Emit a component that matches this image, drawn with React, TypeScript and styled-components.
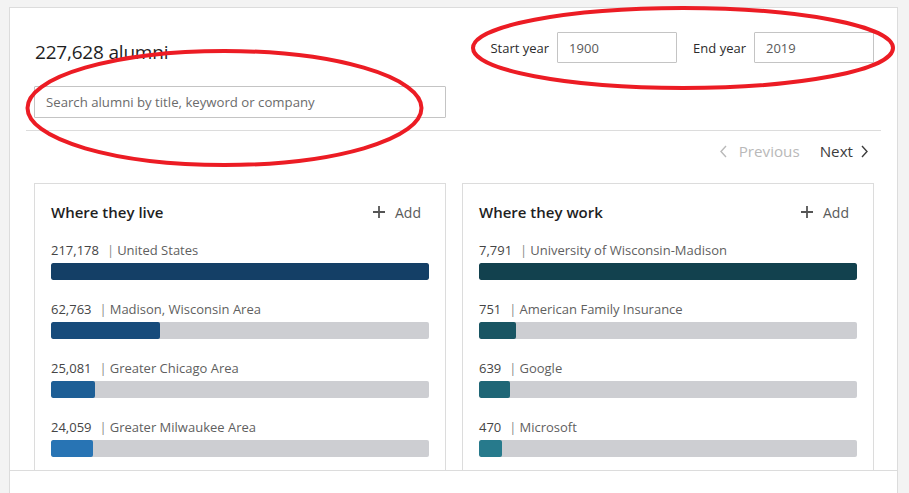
import React from "react";
import styled, { createGlobalStyle } from "styled-components";

const Global = createGlobalStyle`
  html, body { margin: 0; padding: 0; }
  body {
    background: #f3f3f3;
    font-family: "Open Sans", "Noto Sans", Arial, sans-serif;
    color: #333;
    overflow: hidden;
  }
  * { box-sizing: border-box; }
`;

const Page = styled.div`
  position: relative;
  height: 493px;
  padding: 7px 11px 0 9px;
`;

const Shell = styled.div`
  background: #fff;
  border: 1px solid #dcdcdc;
  border-bottom: none;
  height: 486px;
  display: flex;
  flex-direction: column;
`;

const Header = styled.div`
  display: flex;
  justify-content: space-between;
  align-items: flex-start;
  padding: 24px 23px 0 24px;
`;

const LeftCol = styled.div`
  display: flex;
  flex-direction: column;
`;

const Count = styled.h1`
  margin: 7px 0 0 1px;
  font-size: 19px;
  line-height: 26px;
  font-weight: 400;
  color: #1f1f1f;
  letter-spacing: -0.2px;
`;

const Search = styled.input`
  margin-top: 21px;
  width: 412px;
  height: 32px;
  border: 1px solid #c4c4c4;
  border-radius: 1px;
  padding: 0 11px;
  font-family: inherit;
  font-size: 13.2px;
  color: #333;
  &::placeholder { color: #6b6b6b; }
  outline: none;
`;

const YearGroup = styled.div`
  display: flex;
  align-items: center;
`;

const YearLabel = styled.label<{ $first?: boolean }>`
  font-size: 13px;
  color: #2b2b2b;
  margin-right: 8px;
  margin-left: ${(p) => (p.$first ? "0" : "16px")};
`;

const YearInput = styled.input`
  width: 120px;
  height: 31px;
  border: 1px solid #c4c4c4;
  border-radius: 1px;
  padding: 0 11px;
  font-family: inherit;
  font-size: 13px;
  color: #5a5a5a;
  outline: none;
`;

const Divider = styled.hr`
  margin: 12px 16px 0 16px;
  border: none;
  border-top: 1px solid #dcdcdc;
`;

const Pager = styled.div`
  display: flex;
  justify-content: flex-end;
  align-items: center;
  gap: 20px;
  height: 40px;
  padding-right: 29px;
  margin-bottom: 12px;
`;

const PageBtn = styled.button<{ $disabled?: boolean }>`
  display: flex;
  align-items: center;
  gap: ${(p) => (p.$disabled ? "12px" : "8px")};
  background: none;
  border: none;
  padding: 0;
  font-family: inherit;
  font-size: 15.2px;
  color: ${(p) => (p.$disabled ? "#b9b9b9" : "#3c3c3c")};
  cursor: pointer;
`;

const Content = styled.div`
  flex: 1;
  overflow: hidden;
  display: grid;
  grid-template-columns: 1fr 1fr;
  gap: 16px;
  padding: 0 23px 0 24px;
`;

const Card = styled.section`
  border: 1px solid #dcdcdc;
  border-bottom: none;
  padding: 17px 16px 0 16px;
`;

const CardHead = styled.div`
  display: flex;
  justify-content: space-between;
  align-items: center;
  height: 22px;
  margin-bottom: 18px;
`;

const CardTitle = styled.h2`
  margin: 0;
  font-size: 15px;
  font-weight: 600;
  color: #1f1f1f;
`;

const AddBtn = styled.button`
  display: flex;
  align-items: center;
  gap: 10px;
  background: none;
  border: none;
  padding: 0;
  margin-right: 8px;
  font-family: inherit;
  font-size: 14px;
  color: #5a5a5a;
`;

const Row = styled.div`
  margin-bottom: 20px;
`;

const RowLabel = styled.div`
  font-size: 13px;
  line-height: 18px;
  color: #5f5f5f;
  display: flex;
  align-items: center;
`;

const Num = styled.span`
  color: #454545;
  margin-right: 8px;
`;

const Pipe = styled.span`
  color: #8a8a8a;
  margin-right: 3px;
`;

const Track = styled.div`
  margin-top: 4px;
  height: 17px;
  background: #cdced2;
  border-radius: 2px;
  overflow: hidden;
`;

const Fill = styled.div<{ $color: string }>`
  height: 100%;
  background: ${(p) => p.$color};
  border-radius: 2px;
`;

const Footer = styled.div`
  height: 23px;
  border-top: 1px solid #dcdcdc;
`;

const Overlay = styled.svg`
  position: absolute;
  left: 0;
  top: 0;
  pointer-events: none;
`;

type Item = { n: string; label: string; pct: number; color: string };

const live: Item[] = [
  { n: "217,178", label: "United States", pct: 100, color: "#143f66" },
  { n: "62,763", label: "Madison, Wisconsin Area", pct: 28.9, color: "#174b7b" },
  { n: "25,081", label: "Greater Chicago Area", pct: 11.6, color: "#1e5f96" },
  { n: "24,059", label: "Greater Milwaukee Area", pct: 11.1, color: "#2874b4" },
];

const work: Item[] = [
  { n: "7,791", label: "University of Wisconsin-Madison", pct: 100, color: "#12414e" },
  { n: "751", label: "American Family Insurance", pct: 9.8, color: "#195563" },
  { n: "639", label: "Google", pct: 8.2, color: "#1f6676" },
  { n: "470", label: "Microsoft", pct: 6.1, color: "#277a8c" },
];

const Plus = () => (
  <svg width="12" height="12" viewBox="0 0 12 12">
    <path d="M6 0v12M0 6h12" stroke="#555" strokeWidth="1.8" />
  </svg>
);

const Chevron = ({ dir, color }: { dir: "l" | "r"; color: string }) => (
  <svg width="7" height="13" viewBox="0 0 7 13">
    <path
      d={dir === "l" ? "M6 1L1 6.5 6 12" : "M1 1l5 5.5L1 12"}
      fill="none"
      stroke={color}
      strokeWidth="1.4"
    />
  </svg>
);

const Panel = ({ title, items }: { title: string; items: Item[] }) => (
  <Card>
    <CardHead>
      <CardTitle>{title}</CardTitle>
      <AddBtn>
        <Plus />
        Add
      </AddBtn>
    </CardHead>
    {items.map((it) => (
      <Row key={it.label}>
        <RowLabel>
          <Num>{it.n}</Num>
          <Pipe>|</Pipe>
          {it.label}
        </RowLabel>
        <Track>
          <Fill $color={it.color} style={{ width: `${it.pct}%` }} />
        </Track>
      </Row>
    ))}
  </Card>
);

export default function App() {
  return (
    <Page>
      <Global />
      <Shell>
        <Header>
          <LeftCol>
            <Count>227,628 alumni</Count>
            <Search placeholder="Search alumni by title, keyword or company" />
          </LeftCol>
          <YearGroup>
            <YearLabel $first>Start year</YearLabel>
            <YearInput defaultValue="1900" />
            <YearLabel>End year</YearLabel>
            <YearInput defaultValue="2019" />
          </YearGroup>
        </Header>
        <Divider />
        <Pager>
          <PageBtn $disabled>
            <Chevron dir="l" color="#b9b9b9" />
            Previous
          </PageBtn>
          <PageBtn>
            Next
            <Chevron dir="r" color="#3c3c3c" />
          </PageBtn>
        </Pager>
        <Content>
          <Panel title="Where they live" items={live} />
          <Panel title="Where they work" items={work} />
        </Content>
        <Footer />
      </Shell>
      <Overlay width="909" height="493" viewBox="0 0 909 493">
        <ellipse cx="224.5" cy="108" rx="197" ry="57" fill="none" stroke="#ec1c24" strokeWidth="4" />
        <ellipse cx="683" cy="48" rx="210" ry="40" fill="none" stroke="#ec1c24" strokeWidth="4" />
      </Overlay>
    </Page>
  );
}
